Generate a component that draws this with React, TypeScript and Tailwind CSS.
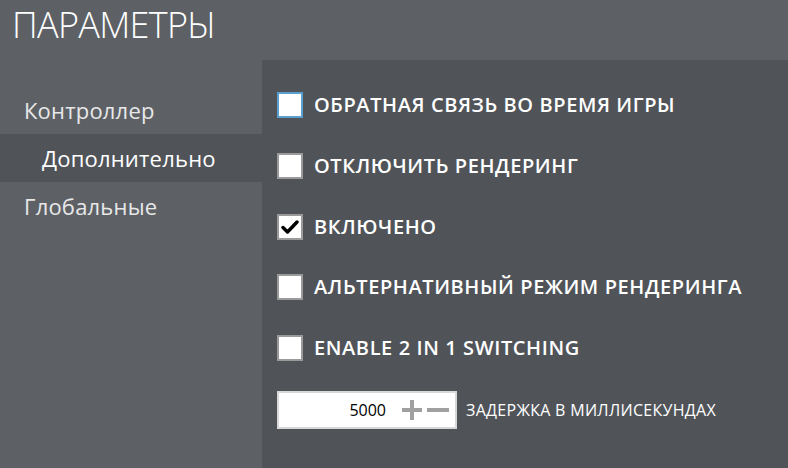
import { useState } from 'react';

const OPTIONS = [
  { label: 'ОБРАТНАЯ СВЯЗЬ ВО ВРЕМЯ ИГРЫ', checked: false, focused: true },
  { label: 'ОТКЛЮЧИТЬ РЕНДЕРИНГ', checked: false },
  { label: 'ВКЛЮЧЕНО', checked: true },
  { label: 'АЛЬТЕРНАТИВНЫЙ РЕЖИМ РЕНДЕРИНГА', checked: false },
  { label: 'ENABLE 2 IN 1 SWITCHING', checked: false },
];

const NAV = ['Контроллер', 'Дополнительно', 'Глобальные'];

function Checkbox({ checked, focused }: { checked: boolean; focused?: boolean }) {
  return (
    <div
      className={`w-[26px] h-[26px] bg-white border-2 flex items-center justify-center shrink-0 ${
        focused ? 'border-[#5b9fcf]' : 'border-[#9a9a9a]'
      }`}
    >
      {checked && (
        <svg width="18" height="16" viewBox="0 0 18 16">
          <path d="M2 8.5 L6.5 13 L16 3" fill="none" stroke="#000" strokeWidth="3.4" strokeLinecap="round" strokeLinejoin="round" />
        </svg>
      )}
    </div>
  );
}

export default function App() {
  const [selected] = useState(1);

  return (
    <div className="w-[788px] h-[468px] bg-[#5d6166] flex flex-col overflow-hidden font-['Open_Sans',sans-serif]">
      <h1 className="h-[60px] pl-[12px] pt-[1px] text-[36px] font-light leading-[48px] text-white tracking-[-0.7px]">
        ПАРАМЕТРЫ
      </h1>

      <div className="flex flex-1">
        <nav className="w-[262px] pt-[26px] flex flex-col">
          {NAV.map((item, i) => (
            <div
              key={item}
              className={`h-[48px] flex items-center text-[22px] tracking-[0.2px] ${
                i === selected ? 'bg-[#505459] pl-[42px] text-white' : 'pl-[24px] text-[#e8e8e8]'
              }`}
            >
              {item}
            </div>
          ))}
        </nav>

        <div className="flex-1 bg-[#505459] pl-[15px] pt-[32px]">
          <div className="flex flex-col gap-[34.8px]">
            {OPTIONS.map((o) => (
              <div key={o.label} className="flex items-center gap-[11px] h-[26px]">
                <Checkbox checked={o.checked} focused={o.focused} />
                <span className="text-[20px] font-semibold text-white tracking-[0.6px]">{o.label}</span>
              </div>
            ))}
          </div>

          <div className="flex items-center mt-[30px]">
            <div className="w-[180px] h-[38px] bg-white border-2 border-[#d8d8d8] flex items-center justify-end pr-[6px]">
              <span className="text-[16px] text-black mr-[14px]">5000</span>
              <svg width="24" height="24" viewBox="0 0 24 24" className="mr-[3px]">
                <path d="M2 12 H22 M12 2 V22" stroke="#a0a0a0" strokeWidth="4" />
              </svg>
              <svg width="22" height="24" viewBox="0 0 22 24">
                <path d="M0 12 H22" stroke="#a0a0a0" strokeWidth="4" />
              </svg>
            </div>
            <span className="ml-[9px] text-[16px] text-white tracking-[0.3px]">ЗАДЕРЖКА В МИЛЛИСЕКУНДАХ</span>
          </div>
        </div>
      </div>
    </div>
  );
}
